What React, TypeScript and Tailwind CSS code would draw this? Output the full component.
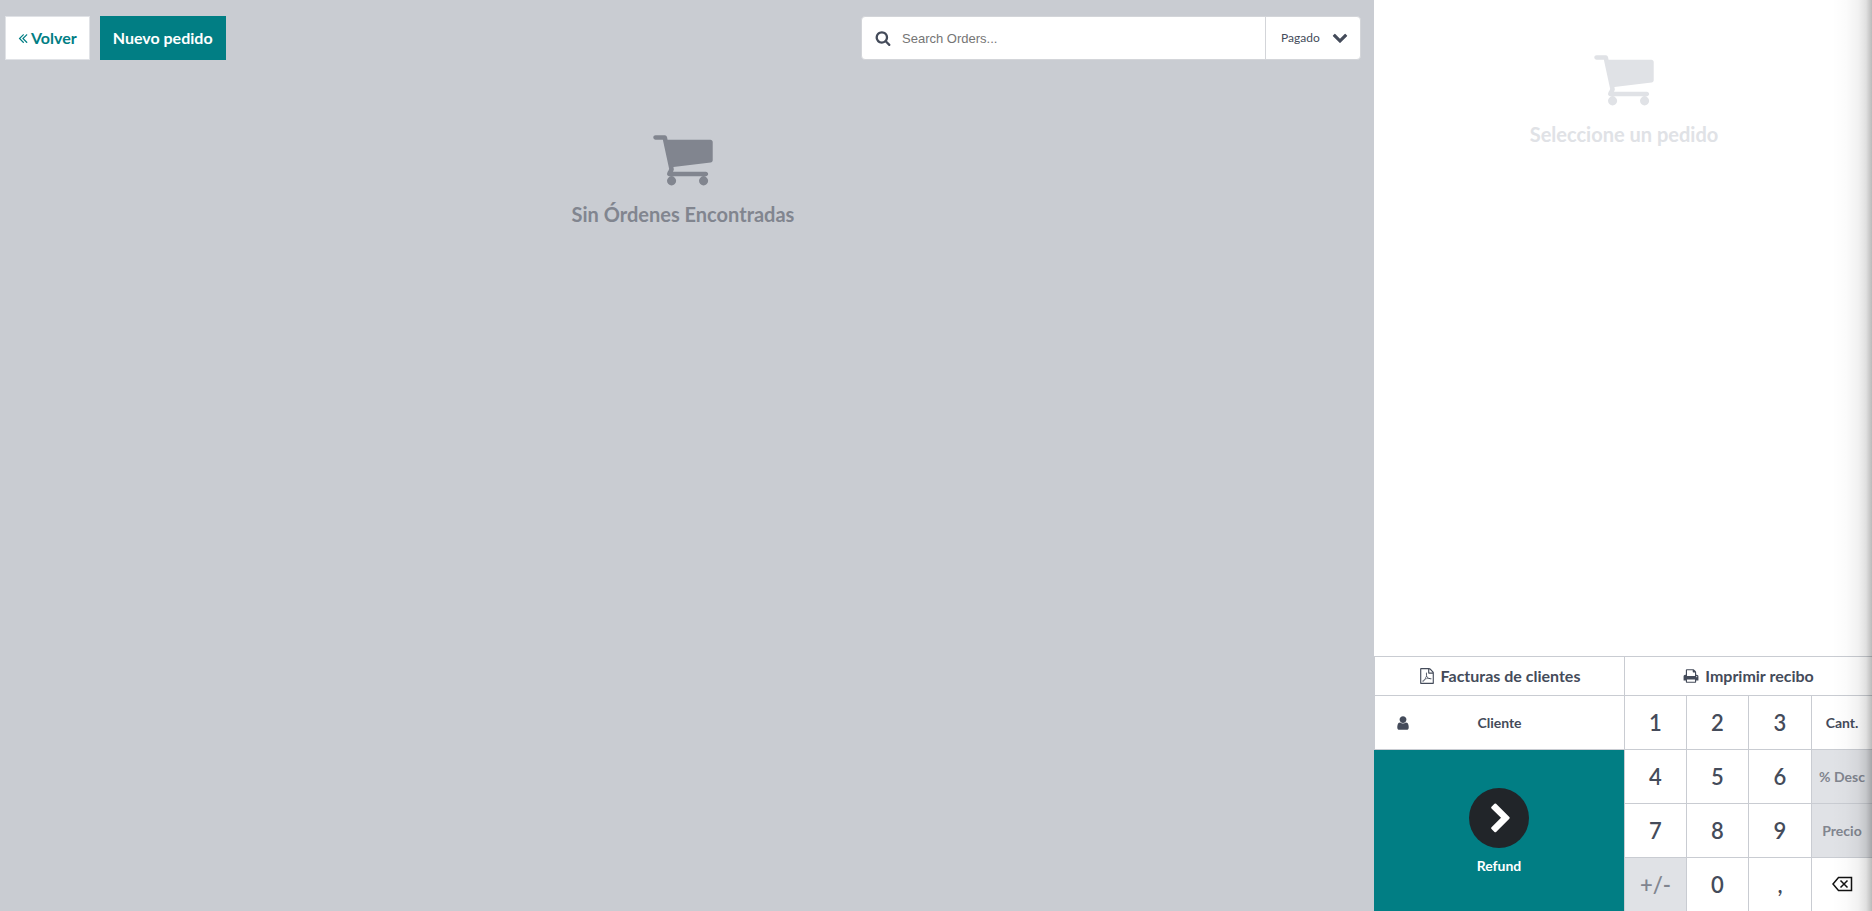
import type { ReactNode } from "react";

const icons = {
  doubleLeft:
    "M1011 1376q0 13-10 23l-50 50q-10 10-23 10t-23-10l-466-466q-10-10-10-23t10-23l466-466q10-10 23-10t23 10l50 50q10 10 10 23t-10 23l-393 393 393 393q10 10 10 23zm384 0q0 13-10 23l-50 50q-10 10-23 10t-23-10l-466-466q-10-10-10-23t10-23l466-466q10-10 23-10t23 10l50 50q10 10 10 23t-10 23l-393 393 393 393q10 10 10 23z",
  search:
    "M1216 832q0-185-131.5-316.5t-316.5-131.5-316.5 131.5-131.5 316.5 131.5 316.5 316.5 131.5 316.5-131.5 131.5-316.5zm512 832q0 52-38 90t-90 38q-54 0-90-38l-343-342q-179 124-399 124-143 0-273.5-55.5t-225-150-150-225-55.5-273.5 55.5-273.5 150-225 225-150 273.5-55.5 273.5 55.5 225 150 150 225 55.5 273.5q0 220-124 399l343 343q37 37 37 90z",
  cart:
    "M704 1536q0 52-38 90t-90 38-90-38-38-90 38-90 90-38 90 38 38 90zm896 0q0 52-38 90t-90 38-90-38-38-90 38-90 90-38 90 38 38 90zm128-1088v512q0 24-16.5 42.5t-40.5 21.5l-1044 122q13 60 13 70 0 16-24 64h920q26 0 45 19t19 45-19 45-45 19h-1024q-26 0-45-19t-19-45q0-11 8-31.5t16-36 21.5-40 15.5-29.5l-177-823h-204q-26 0-45-19t-19-45 19-45 45-19h256q16 0 28.5 6.5t19.5 15.5 13 24.5 8 26 5.5 29.5 4.5 26h1201q26 0 45 19t19 45z",
  chevronDown:
    "M1683 808l-742 741q-19 19-45 19t-45-19l-742-741q-19-19-19-45.500t19-45.500l166-165q19-19 45-19t45 19l531 531 531-531q19-19 45-19t45 19l166 165q19 19 19 45.500t-19 45.500z",
  chevronRight:
    "M1363 877l-742 742q-19 19-45 19t-45-19l-166-166q-19-19-19-45t19-45l531-531-531-531q-19-19-19-45t19-45l166-166q19-19 45-19t45 19l742 742q19 19 19 45t-19 45z",
  user:
    "M1536 1399q0 109-62.5 187t-150.5 78h-854q-88 0-150.5-78t-62.5-187q0-85 8.5-160.5t31.5-152 58.5-131 94-89 134.5-34.5q131 128 313 128t313-128q76 0 134.5 34.5t94 89 58.5 131 31.5 152 8.5 160.5zm-256-887q0 159-112.5 271.5t-271.5 112.5-271.5-112.5-112.5-271.5 112.5-271.5 271.5-112.5 271.5 112.5 112.5 271.5z",
  print:
    "M448 1536h896v-256h-896v256zm0-640h896v-384h-160q-40 0-68-28t-28-68v-160h-640v640zm1152 64q0-26-19-45t-45-19-45 19-19 45 19 45 45 19 45-19 19-45zm128 0v416q0 13-9.5 22.5t-22.5 9.5h-224v160q0 40-28 68t-68 28h-960q-40 0-68-28t-28-68v-160h-224q-13 0-22.5-9.5t-9.5-22.5v-416q0-79 56.5-135.5t135.5-56.5h64v-544q0-40 28-68t68-28h672q40 0 88 20t76 48l152 152q28 28 48 76t20 88v256h64q79 0 135.5 56.5t56.5 135.5z",
  pdf:
    "M1596 380q28 28 48 76t20 88v1152q0 40-28 68t-68 28h-1344q-40 0-68-28t-28-68v-1600q0-40 28-68t68-28h896q40 0 88 20t76 48zm-444-244v376h376q-10-29-22-41l-313-313q-12-12-41-22zm384 1528v-1024h-416q-40 0-68-28t-28-68v-416h-768v1536h1280zm-514-593q33 26 84 56 59-7 117-7 147 0 177 49 16 22 2 52 0 1-1 2l-2 2v1q-6 38-71 38-48 0-115-20t-130-53q-221 24-392 83-153 262-242 262-15 0-28-7l-24-12q-1-1-6-5-10-10-6-36 9-40 56-91.5t132-96.5q14-9 23 6 2 2 2 4 52-85 107-197 68-136 104-262-24-82-30.5-159.5t6.5-127.5q11-40 42-40h22q23 0 35 15 18 21 9 68-2 6-4 8 1 3 1 8v30q-2 123-14 192 55 164 146 238zm-576 411q52-24 137-158-51 40-87.5 84t-49.5 74zm398-920q-15 42-2 132 1-7 7-44 0-3 7-43 1-4 4-8-1-1-1-2t-1-2-1-3q-1-22-13-36 0 1-1 2v4zm-124 661q135-54 284-81-2-1-13-9.5t-16-13.5q-76-67-127-176-27 86-83 197-30 56-45 83zm646-16q-24-24-140-24 76 28 124 28 14 0 18-1 0-1-2-3z",
};

function Icon({ name, className }: { name: keyof typeof icons; className: string }) {
  return (
    <svg viewBox="0 0 1792 1792" fill="currentColor" aria-hidden="true" className={className}>
      <path d={icons[name]} />
    </svg>
  );
}

function EmptyState({ text, className }: { text: string; className: string }) {
  return (
    <div className={`flex flex-col items-center ${className}`}>
      <Icon name="cart" className="size-16" />
      <p className="mt-2 text-xl leading-8 font-bold">{text}</p>
    </div>
  );
}

const cell = "flex items-center justify-center border-t border-l border-[#c9ccd2]";

function Key({ label, small, disabled, children }: { label: string; small?: boolean; disabled?: boolean; children?: ReactNode }) {
  return (
    <button
      type="button"
      aria-label={label}
      disabled={disabled}
      className={`${cell} ${small ? "text-sm font-bold" : "pb-px text-[22px] font-semibold"} ${disabled ? "bg-[#e0e2e6] text-[#81858f]" : "bg-white"}`}
    >
      {children ?? label}
    </button>
  );
}

export default function App() {
  return (
    <div className="relative flex h-screen overflow-hidden bg-[#c9ccd2] font-['Lato',sans-serif] text-[#444b5a]">
      <main className="flex min-w-0 flex-1 flex-col">
        <header className="flex items-center justify-between pt-4 pr-[13px] pl-[5px]">
          <div className="flex gap-[10px]">
            <button type="button" className="flex h-11 items-center border border-[#e0e2e6] bg-white pr-3 pl-[9px] text-base font-bold text-[#017e84]">
              <Icon name="doubleLeft" className="size-4" />
              Volver
            </button>
            <button type="button" className="h-11 bg-[#017e84] px-[13px] text-base font-bold text-white">
              Nuevo pedido
            </button>
          </div>
          <div className="flex h-11 w-[500px] overflow-hidden rounded border border-[#d3d5d9] bg-white">
            <label className="flex min-w-0 flex-1 items-center pl-[13px]">
              <Icon name="search" className="mr-[11px] size-4 shrink-0" />
              <input
                type="text"
                aria-label="Search Orders"
                placeholder="Search Orders..."
                className="min-w-0 flex-1 pt-px font-['Liberation_Sans',sans-serif] text-[13px] outline-none placeholder:text-[#757575]"
              />
            </label>
            <div className="relative w-[95px] border-l border-[#d3d5d9]">
              <select aria-label="Estado" className="size-full appearance-none bg-transparent pl-[15px] text-xs font-normal">
                <option>Pagado</option>
              </select>
              <Icon name="chevronDown" className="pointer-events-none absolute top-3 right-3 size-4" />
            </div>
          </div>
        </header>
        <EmptyState text="Sin Órdenes Encontradas" className="mt-[66px] pr-2 text-[#81858f]" />
      </main>

      <aside className="flex w-[498px] shrink-0 flex-col bg-white">
        <EmptyState text="Seleccione un pedido" className="flex-1 pt-[46px] pl-[2px] text-[#e0e2e6]" />
        <div className="grid grid-cols-[250px_1fr]">
          <button type="button" className={`${cell} h-[39px] text-base font-bold`}>
            <Icon name="pdf" className="mr-[6px] size-4" />
            Facturas de clientes
          </button>
          <button type="button" className={`${cell} h-[39px] text-base font-bold`}>
            <Icon name="print" className="mr-[6px] size-4" />
            Imprimir recibo
          </button>
          <div className="grid grid-rows-[54px_1fr]">
            <button type="button" className={`${cell} relative text-sm font-bold`}>
              <Icon name="user" className="absolute left-5 size-4" />
              Cliente
            </button>
            <button type="button" className="flex flex-col items-center justify-center border-t border-[#c9ccd2] bg-[#017e84] pt-[2px] text-sm font-bold text-white">
              <span className="mb-2 flex size-[60px] items-center justify-center rounded-full bg-[#212529] pt-[2px] pl-1">
                <Icon name="chevronRight" className="size-8" />
              </span>
              Refund
            </button>
          </div>
          <div className="grid auto-rows-[54px] grid-cols-[1fr_1fr_63px_61px]">
            <Key label="1" />
            <Key label="2" />
            <Key label="3" />
            <Key label="Cant." small />
            <Key label="4" />
            <Key label="5" />
            <Key label="6" />
            <Key label="% Desc" small disabled />
            <Key label="7" />
            <Key label="8" />
            <Key label="9" />
            <Key label="Precio" small disabled />
            <Key label="+/-" disabled />
            <Key label="0" />
            <Key label="," />
            <Key label="Borrar">
              <svg viewBox="0 0 21 16" fill="none" stroke="#111" strokeWidth="1.500" aria-hidden="true" className="h-4 w-[21px]">
                <path d="M6.500 1.500H19.500V14.500H6.500L1 8ZM8.500 4.500L15.500 11.500M15.500 4.500L8.500 11.500" />
              </svg>
            </Key>
          </div>
        </div>
      </aside>
      <div className="pointer-events-none absolute inset-y-0 right-0 w-10 bg-[linear-gradient(to_left,rgba(0,0,0,0.270),rgba(0,0,0,0.120)_15%,rgba(0,0,0,0.050)_35%,rgba(0,0,0,0.015)_65%,transparent)]" />
    </div>
  );
}
